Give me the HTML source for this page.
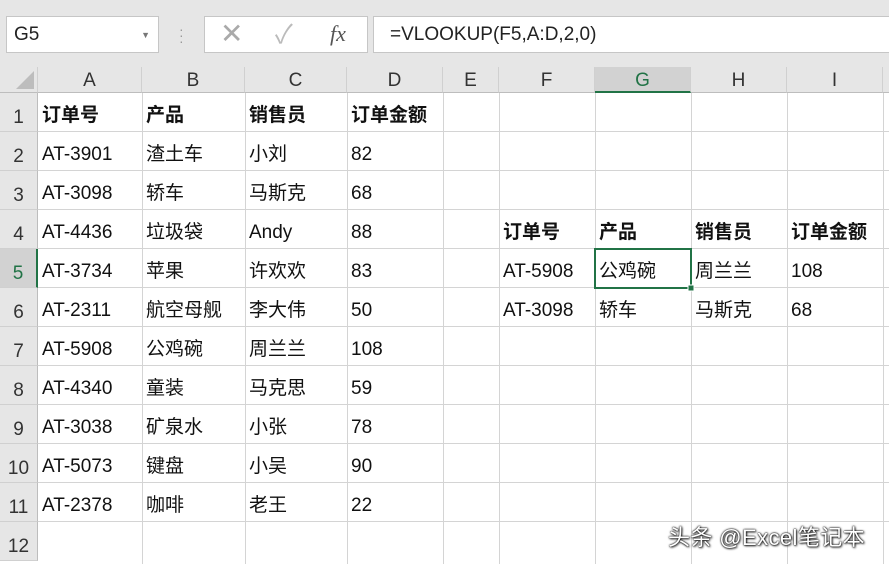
<!DOCTYPE html><html><head><meta charset="utf-8"><style>
body{margin:0;width:889px;height:564px;overflow:hidden;background:#fff;font-family:"Liberation Sans","Noto Sans CJK SC",sans-serif;position:relative}
.top{position:absolute;left:0;top:0;width:889px;height:67px;background:#e6e6e6}
.box{position:absolute;background:#fff;border:1px solid #c6c6c6;box-sizing:border-box}
.hdr{position:absolute;top:67px;height:26px;background:#e6e6e6;border-right:1px solid #d0d0d0;border-bottom:1px solid #bdbdbd;box-sizing:border-box;text-align:center;font-size:19px;line-height:28px;color:#333}
.rh{position:absolute;left:0;width:38px;height:39px;background:#e6e6e6;border-bottom:1px solid #d0d0d0;border-right:1px solid #bdbdbd;box-sizing:border-box;text-align:center;font-size:19px;line-height:50px;color:#333}
.c{position:absolute;font-size:19px;line-height:45px;color:#111;white-space:nowrap}
.b{font-weight:bold}
</style></head><body>
<div class="top"></div>
<div class="box" style="left:6px;top:16px;width:153px;height:37px;font-size:19px;line-height:36px;padding-left:7px;color:#222">G5<span style="position:absolute;right:8px;top:0;font-size:9px;color:#777">▼</span></div>
<div style="position:absolute;left:179px;top:26px;color:#999;font-size:14px;line-height:6px">·<br>·<br>·</div>
<div class="box" style="left:204px;top:16px;width:164px;height:37px"></div>
<div style="position:absolute;left:220px;top:18px;font-size:28px;color:#aaa;line-height:32px">✕</div>
<div style="position:absolute;left:275px;top:18px;font-size:26px;color:#bbb;line-height:32px">✓</div>
<div style="position:absolute;left:330px;top:18px;font-family:'Liberation Serif',serif;font-style:italic;font-size:22px;color:#555;line-height:32px">fx</div>
<div class="box" style="left:373px;top:16px;width:520px;height:37px;font-size:19px;line-height:36px;padding-left:16px;color:#222">=VLOOKUP(F5,A:D,2,0)</div>
<div class="hdr" style="left:0;width:38px"><svg width="38" height="26" style="position:absolute;left:0;top:0"><polygon points="34,4 34,22 16,22" fill="#bdbdbd"/></svg></div>
<div class="hdr" style="left:38px;width:104px">A</div>
<div class="hdr" style="left:142px;width:103px">B</div>
<div class="hdr" style="left:245px;width:102px">C</div>
<div class="hdr" style="left:347px;width:96px">D</div>
<div class="hdr" style="left:443px;width:56px">E</div>
<div class="hdr" style="left:499px;width:96px">F</div>
<div class="hdr" style="left:595px;width:96px;background:#d2d2d2;color:#217346;border-bottom:2px solid #217346">G</div>
<div class="hdr" style="left:691px;width:96px">H</div>
<div class="hdr" style="left:787px;width:96px">I</div>
<div class="hdr" style="left:883px;width:10px"></div>
<svg width="889" height="471" style="position:absolute;left:0;top:93px">
<g stroke="#d4d4d4" stroke-width="1">
<line x1="38" y1="38.5" x2="889" y2="38.5"/><line x1="38" y1="77.5" x2="889" y2="77.5"/><line x1="38" y1="116.5" x2="889" y2="116.5"/><line x1="38" y1="155.5" x2="889" y2="155.5"/><line x1="38" y1="194.5" x2="889" y2="194.5"/><line x1="38" y1="233.5" x2="889" y2="233.5"/><line x1="38" y1="272.5" x2="889" y2="272.5"/><line x1="38" y1="311.5" x2="889" y2="311.5"/><line x1="38" y1="350.5" x2="889" y2="350.5"/><line x1="38" y1="389.5" x2="889" y2="389.5"/><line x1="38" y1="428.5" x2="889" y2="428.5"/>
<line x1="142.5" y1="0" x2="142.5" y2="471"/><line x1="245.5" y1="0" x2="245.5" y2="471"/><line x1="347.5" y1="0" x2="347.5" y2="471"/><line x1="443.5" y1="0" x2="443.5" y2="471"/><line x1="499.5" y1="0" x2="499.5" y2="471"/><line x1="595.5" y1="0" x2="595.5" y2="471"/><line x1="691.5" y1="0" x2="691.5" y2="471"/><line x1="787.5" y1="0" x2="787.5" y2="471"/><line x1="883.5" y1="0" x2="883.5" y2="471"/>
</g>
<rect x="595" y="156" width="96" height="39" fill="none" stroke="#217346" stroke-width="2"/>
<rect x="688" y="192" width="6" height="6" fill="#217346" stroke="#fff"/>
</svg>
<div class="rh" style="top:93px">1</div><div class="rh" style="top:132px">2</div><div class="rh" style="top:171px">3</div><div class="rh" style="top:210px">4</div><div class="rh" style="top:249px;background:#d2d2d2;color:#217346;border-right:2px solid #217346">5</div><div class="rh" style="top:288px">6</div><div class="rh" style="top:327px">7</div><div class="rh" style="top:366px">8</div><div class="rh" style="top:405px">9</div><div class="rh" style="top:444px">10</div><div class="rh" style="top:483px">11</div><div class="rh" style="top:522px">12</div>

<div class="c b" style="left:42px;top:93px">订单号</div><div class="c b" style="left:146px;top:93px">产品</div><div class="c b" style="left:249px;top:93px">销售员</div><div class="c b" style="left:351px;top:93px">订单金额</div>
<div class="c" style="left:42px;top:132px">AT-3901</div><div class="c" style="left:146px;top:132px">渣土车</div><div class="c" style="left:249px;top:132px">小刘</div><div class="c" style="left:351px;top:132px">82</div>
<div class="c" style="left:42px;top:171px">AT-3098</div><div class="c" style="left:146px;top:171px">轿车</div><div class="c" style="left:249px;top:171px">马斯克</div><div class="c" style="left:351px;top:171px">68</div>
<div class="c" style="left:42px;top:210px">AT-4436</div><div class="c" style="left:146px;top:210px">垃圾袋</div><div class="c" style="left:249px;top:210px">Andy</div><div class="c" style="left:351px;top:210px">88</div>
<div class="c" style="left:42px;top:249px">AT-3734</div><div class="c" style="left:146px;top:249px">苹果</div><div class="c" style="left:249px;top:249px">许欢欢</div><div class="c" style="left:351px;top:249px">83</div>
<div class="c" style="left:42px;top:288px">AT-2311</div><div class="c" style="left:146px;top:288px">航空母舰</div><div class="c" style="left:249px;top:288px">李大伟</div><div class="c" style="left:351px;top:288px">50</div>
<div class="c" style="left:42px;top:327px">AT-5908</div><div class="c" style="left:146px;top:327px">公鸡碗</div><div class="c" style="left:249px;top:327px">周兰兰</div><div class="c" style="left:351px;top:327px">108</div>
<div class="c" style="left:42px;top:366px">AT-4340</div><div class="c" style="left:146px;top:366px">童装</div><div class="c" style="left:249px;top:366px">马克思</div><div class="c" style="left:351px;top:366px">59</div>
<div class="c" style="left:42px;top:405px">AT-3038</div><div class="c" style="left:146px;top:405px">矿泉水</div><div class="c" style="left:249px;top:405px">小张</div><div class="c" style="left:351px;top:405px">78</div>
<div class="c" style="left:42px;top:444px">AT-5073</div><div class="c" style="left:146px;top:444px">键盘</div><div class="c" style="left:249px;top:444px">小吴</div><div class="c" style="left:351px;top:444px">90</div>
<div class="c" style="left:42px;top:483px">AT-2378</div><div class="c" style="left:146px;top:483px">咖啡</div><div class="c" style="left:249px;top:483px">老王</div><div class="c" style="left:351px;top:483px">22</div>

<div class="c b" style="left:503px;top:210px">订单号</div><div class="c b" style="left:599px;top:210px">产品</div><div class="c b" style="left:695px;top:210px">销售员</div><div class="c b" style="left:791px;top:210px">订单金额</div>
<div class="c" style="left:503px;top:249px">AT-5908</div><div class="c" style="left:599px;top:249px">公鸡碗</div><div class="c" style="left:695px;top:249px">周兰兰</div><div class="c" style="left:791px;top:249px">108</div>
<div class="c" style="left:503px;top:288px">AT-3098</div><div class="c" style="left:599px;top:288px">轿车</div><div class="c" style="left:695px;top:288px">马斯克</div><div class="c" style="left:791px;top:288px">68</div>

<div style="position:absolute;left:668px;top:523px;font-size:22px;line-height:30px;color:#fff;letter-spacing:0.4px;text-shadow:0 0 2px #000,0 0 1px #000,1px 1px 2px #333">头条 @Excel笔记本</div>
</body></html>
